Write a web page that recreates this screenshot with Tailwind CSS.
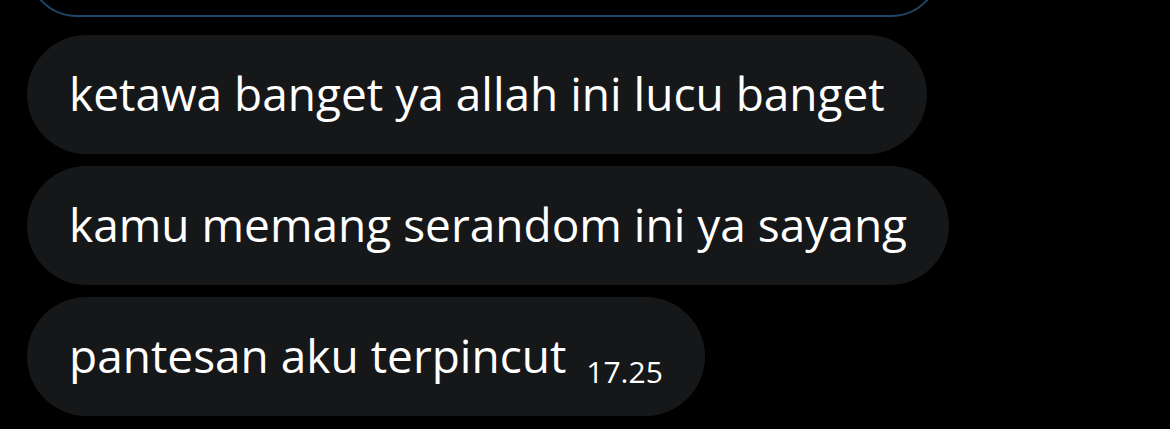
<!DOCTYPE html>
<html lang="id">
<head>
  <meta charset="UTF-8" />
  <meta name="viewport" content="width=device-width, initial-scale=1.0" />
  <title>Chat</title>
  <script src="https://cdn.jsdelivr.net/npm/@tailwindcss/browser@4"></script>
</head>
<body class="min-h-screen bg-black text-white overflow-hidden font-['Open_Sans',sans-serif]">

  <!-- Messages -->
  <main class="flex flex-col items-start gap-3 pl-[27px]">
    <!-- Shared card, scrolled off the top -->
    <div class="flex h-[17px] w-full max-w-[914px] items-end overflow-hidden mb-[6px]">
      <div class="h-32 w-full shrink-0 rounded-[50px] border-2 border-[#1f4666]"></div>
    </div>

    <p class="rounded-full bg-[#161719] px-[42px] pt-[30px] pb-8 text-[46px] leading-[57px] whitespace-nowrap">ketawa banget ya allah ini lucu banget</p>
    <p class="rounded-full bg-[#161719] px-[42px] pt-[30px] pb-8 text-[46px] leading-[57px] whitespace-nowrap">kamu memang serandom ini ya sayang</p>
    <div class="flex items-end gap-5 rounded-full bg-[#161719] px-[42px] pt-[30px] pb-8 whitespace-nowrap">
      <p class="text-[46px] leading-[57px]">pantesan aku terpincut</p>
      <time class="text-[30px] leading-6">17.25</time>
    </div>
  </main>

</body>
</html>
